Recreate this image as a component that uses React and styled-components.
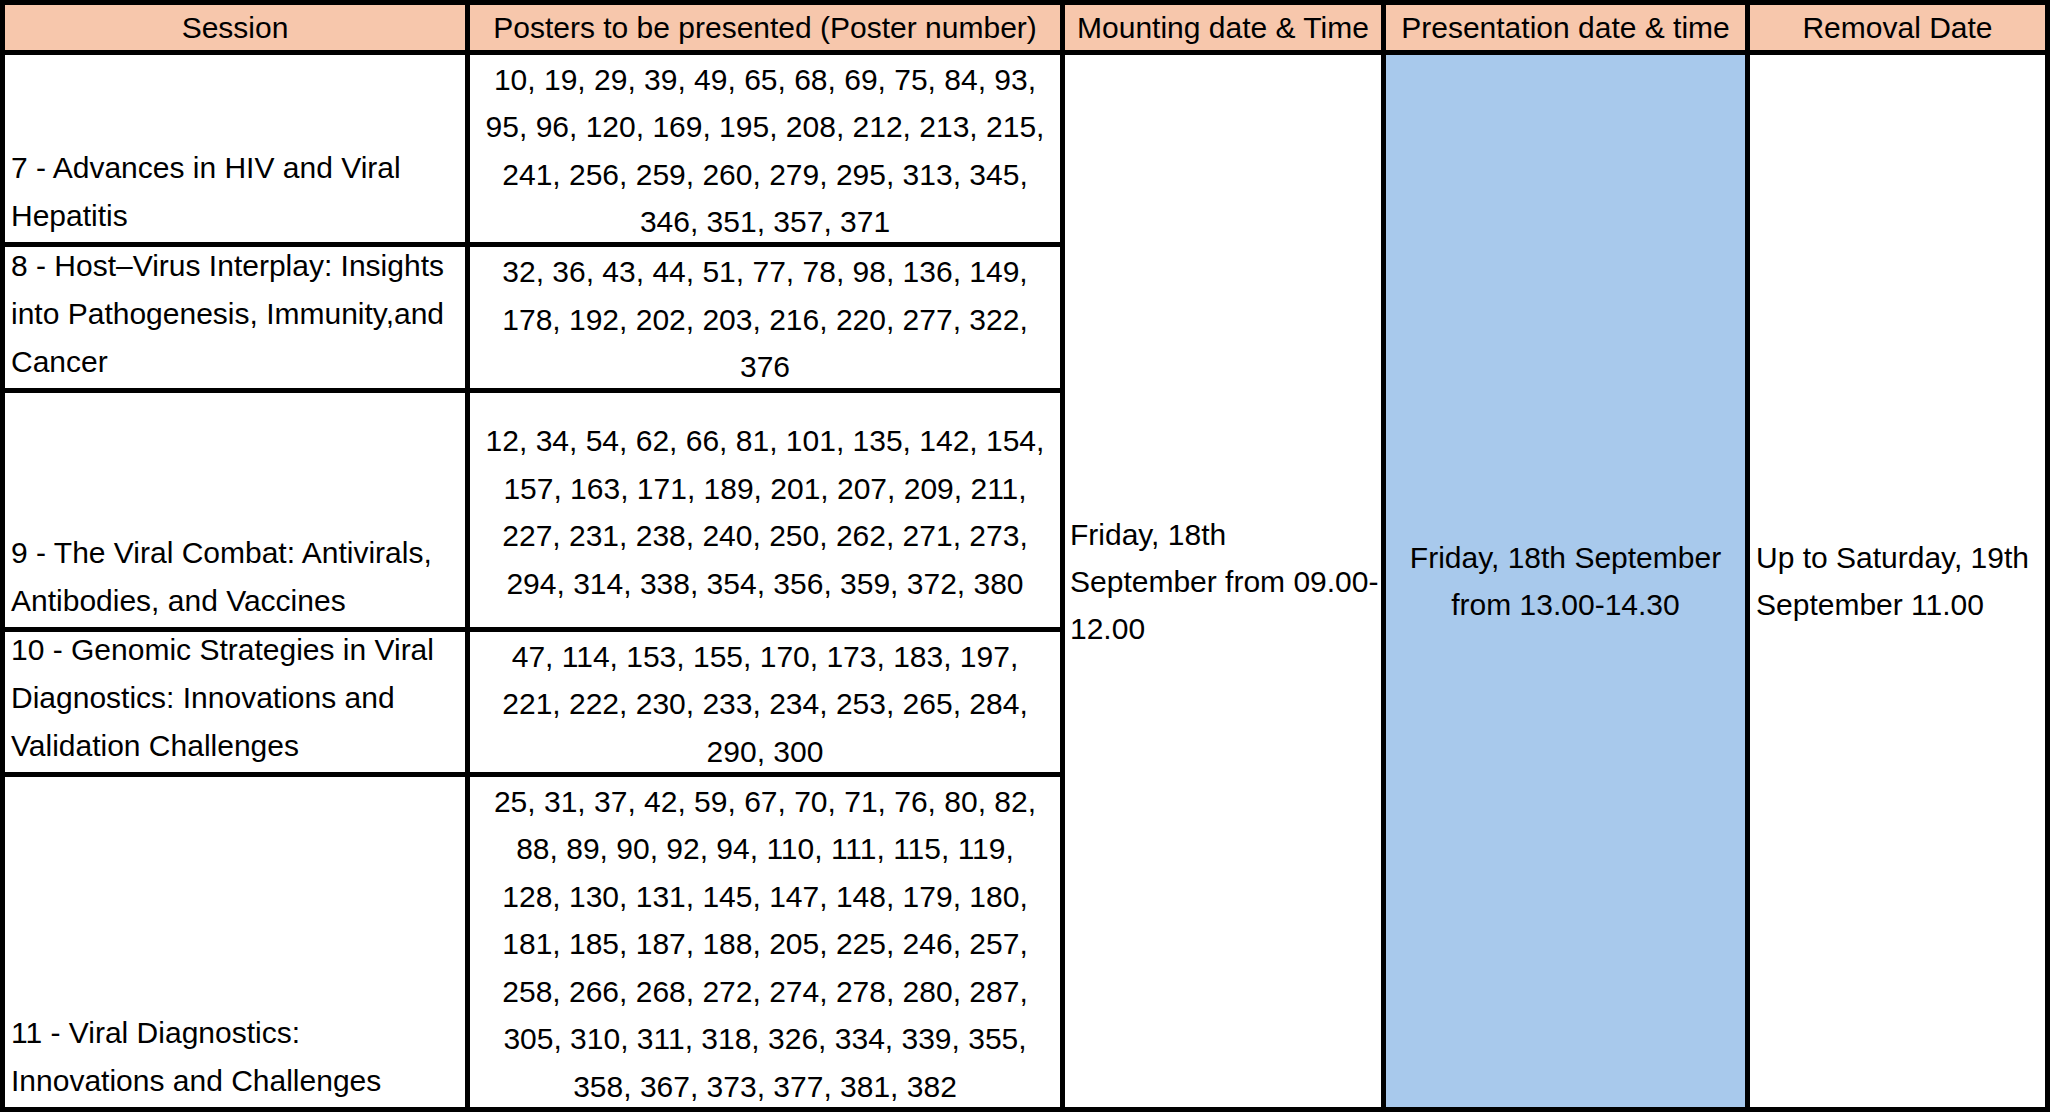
import React from 'react';
import styled, { createGlobalStyle } from 'styled-components';

const GlobalStyle = createGlobalStyle`
  html, body {
    margin: 0;
    padding: 0;
    background: #ffffff;
  }
  body {
    font-family: "Liberation Sans", Arial, sans-serif;
    color: #000000;
  }
`;

// the sheet is a black grid; the 5px gaps are the cell borders
const Sheet = styled.div`
  display: grid;
  grid-template-columns: 460px 590px 316px 359px 295px;
  grid-template-rows: 45px 187px 141px 234px 140px 330px;
  gap: 5px;
  padding: 5px;
  width: 2050px;
  box-sizing: border-box;
  background: #000000;
`;

const HeadCell = styled.div`
  display: flex;
  align-items: center;
  justify-content: center;
  background: #f7c7ac;
  font-size: 30px;
  line-height: 45px;
  white-space: nowrap;
  overflow: hidden;
`;

const Cell = styled.div`
  display: flex;
  flex-direction: column;
  justify-content: ${p => (p.$middle ? 'center' : 'flex-end')};
  align-items: ${p => (p.$center ? 'center' : 'flex-start')};
  padding: ${p => p.$pad || '0 4px 2px 6px'};
  background: ${p => p.$bg || '#ffffff'};
  grid-row: ${p => p.$rows || 'auto'};
  grid-column: ${p => p.$col || 'auto'};
  overflow: hidden;
  font-size: 30px;
  line-height: ${p => p.$lh || '48px'};
`;

const Line = styled.span`
  display: block;
  white-space: nowrap;
`;

const sessions = [
  {
    title: ['7 - Advances in HIV and Viral', 'Hepatitis'],
    posters: [
      '10, 19, 29, 39, 49, 65, 68, 69, 75, 84, 93,',
      '95, 96, 120, 169, 195, 208, 212, 213, 215,',
      '241, 256, 259, 260, 279, 295, 313, 345,',
      '346, 351, 357, 371',
    ],
  },
  {
    title: ['8 - Host\u2013Virus Interplay: Insights', 'into Pathogenesis, Immunity,and', 'Cancer'],
    posters: [
      '32, 36, 43, 44, 51, 77, 78, 98, 136, 149,',
      '178, 192, 202, 203, 216, 220, 277, 322,',
      '376',
    ],
  },
  {
    title: ['9 - The Viral Combat: Antivirals,', 'Antibodies, and Vaccines'],
    posters: [
      '12, 34, 54, 62, 66, 81, 101, 135, 142, 154,',
      '157, 163, 171, 189, 201, 207, 209, 211,',
      '227, 231, 238, 240, 250, 262, 271, 273,',
      '294, 314, 338, 354, 356, 359, 372, 380',
    ],
  },
  {
    title: ['10 - Genomic Strategies in Viral', 'Diagnostics: Innovations and', 'Validation Challenges'],
    posters: [
      '47, 114, 153, 155, 170, 173, 183, 197,',
      '221, 222, 230, 233, 234, 253, 265, 284,',
      '290, 300',
    ],
  },
  {
    title: ['11 - Viral Diagnostics:', 'Innovations and Challenges'],
    posters: [
      '25, 31, 37, 42, 59, 67, 70, 71, 76, 80, 82,',
      '88, 89, 90, 92, 94, 110, 111, 115, 119,',
      '128, 130, 131, 145, 147, 148, 179, 180,',
      '181, 185, 187, 188, 205, 225, 246, 257,',
      '258, 266, 268, 272, 274, 278, 280, 287,',
      '305, 310, 311, 318, 326, 334, 339, 355,',
      '358, 367, 373, 377, 381, 382',
    ],
  },
];

const headers = [
  'Session',
  'Posters to be presented (Poster number)',
  'Mounting date & Time',
  'Presentation date & time',
  'Removal Date',
];

const lines = arr => arr.map(t => <Line key={t}>{t}</Line>);

export default function App() {
  return (
    <>
      <GlobalStyle />
      <Sheet>
        {headers.map(h => (
          <HeadCell key={h}>{h}</HeadCell>
        ))}

        {sessions.map((s, i) => (
          <React.Fragment key={s.title[0]}>
            <Cell $col="1" $rows={`${i + 2}`}>{lines(s.title)}</Cell>
            <Cell $col="2" $rows={`${i + 2}`} $middle $center $pad="4px 0 0" $lh="47.5px">
              {lines(s.posters)}
            </Cell>
          </React.Fragment>
        ))}

        <Cell $col="3" $rows="2 / 7" $middle $pad="0 0 0 5px" $lh="47px">
          {lines(['Friday, 18th', 'September from 09.00-', '12.00'])}
        </Cell>
        <Cell $col="4" $rows="2 / 7" $middle $center $pad="0" $lh="47px" $bg="#a8c9ec">
          {lines(['Friday, 18th September', 'from 13.00-14.30'])}
        </Cell>
        <Cell $col="5" $rows="2 / 7" $middle $pad="0 0 0 6px" $lh="47px">
          {lines(['Up to Saturday, 19th', 'September 11.00'])}
        </Cell>
      </Sheet>
    </>
  );
}
